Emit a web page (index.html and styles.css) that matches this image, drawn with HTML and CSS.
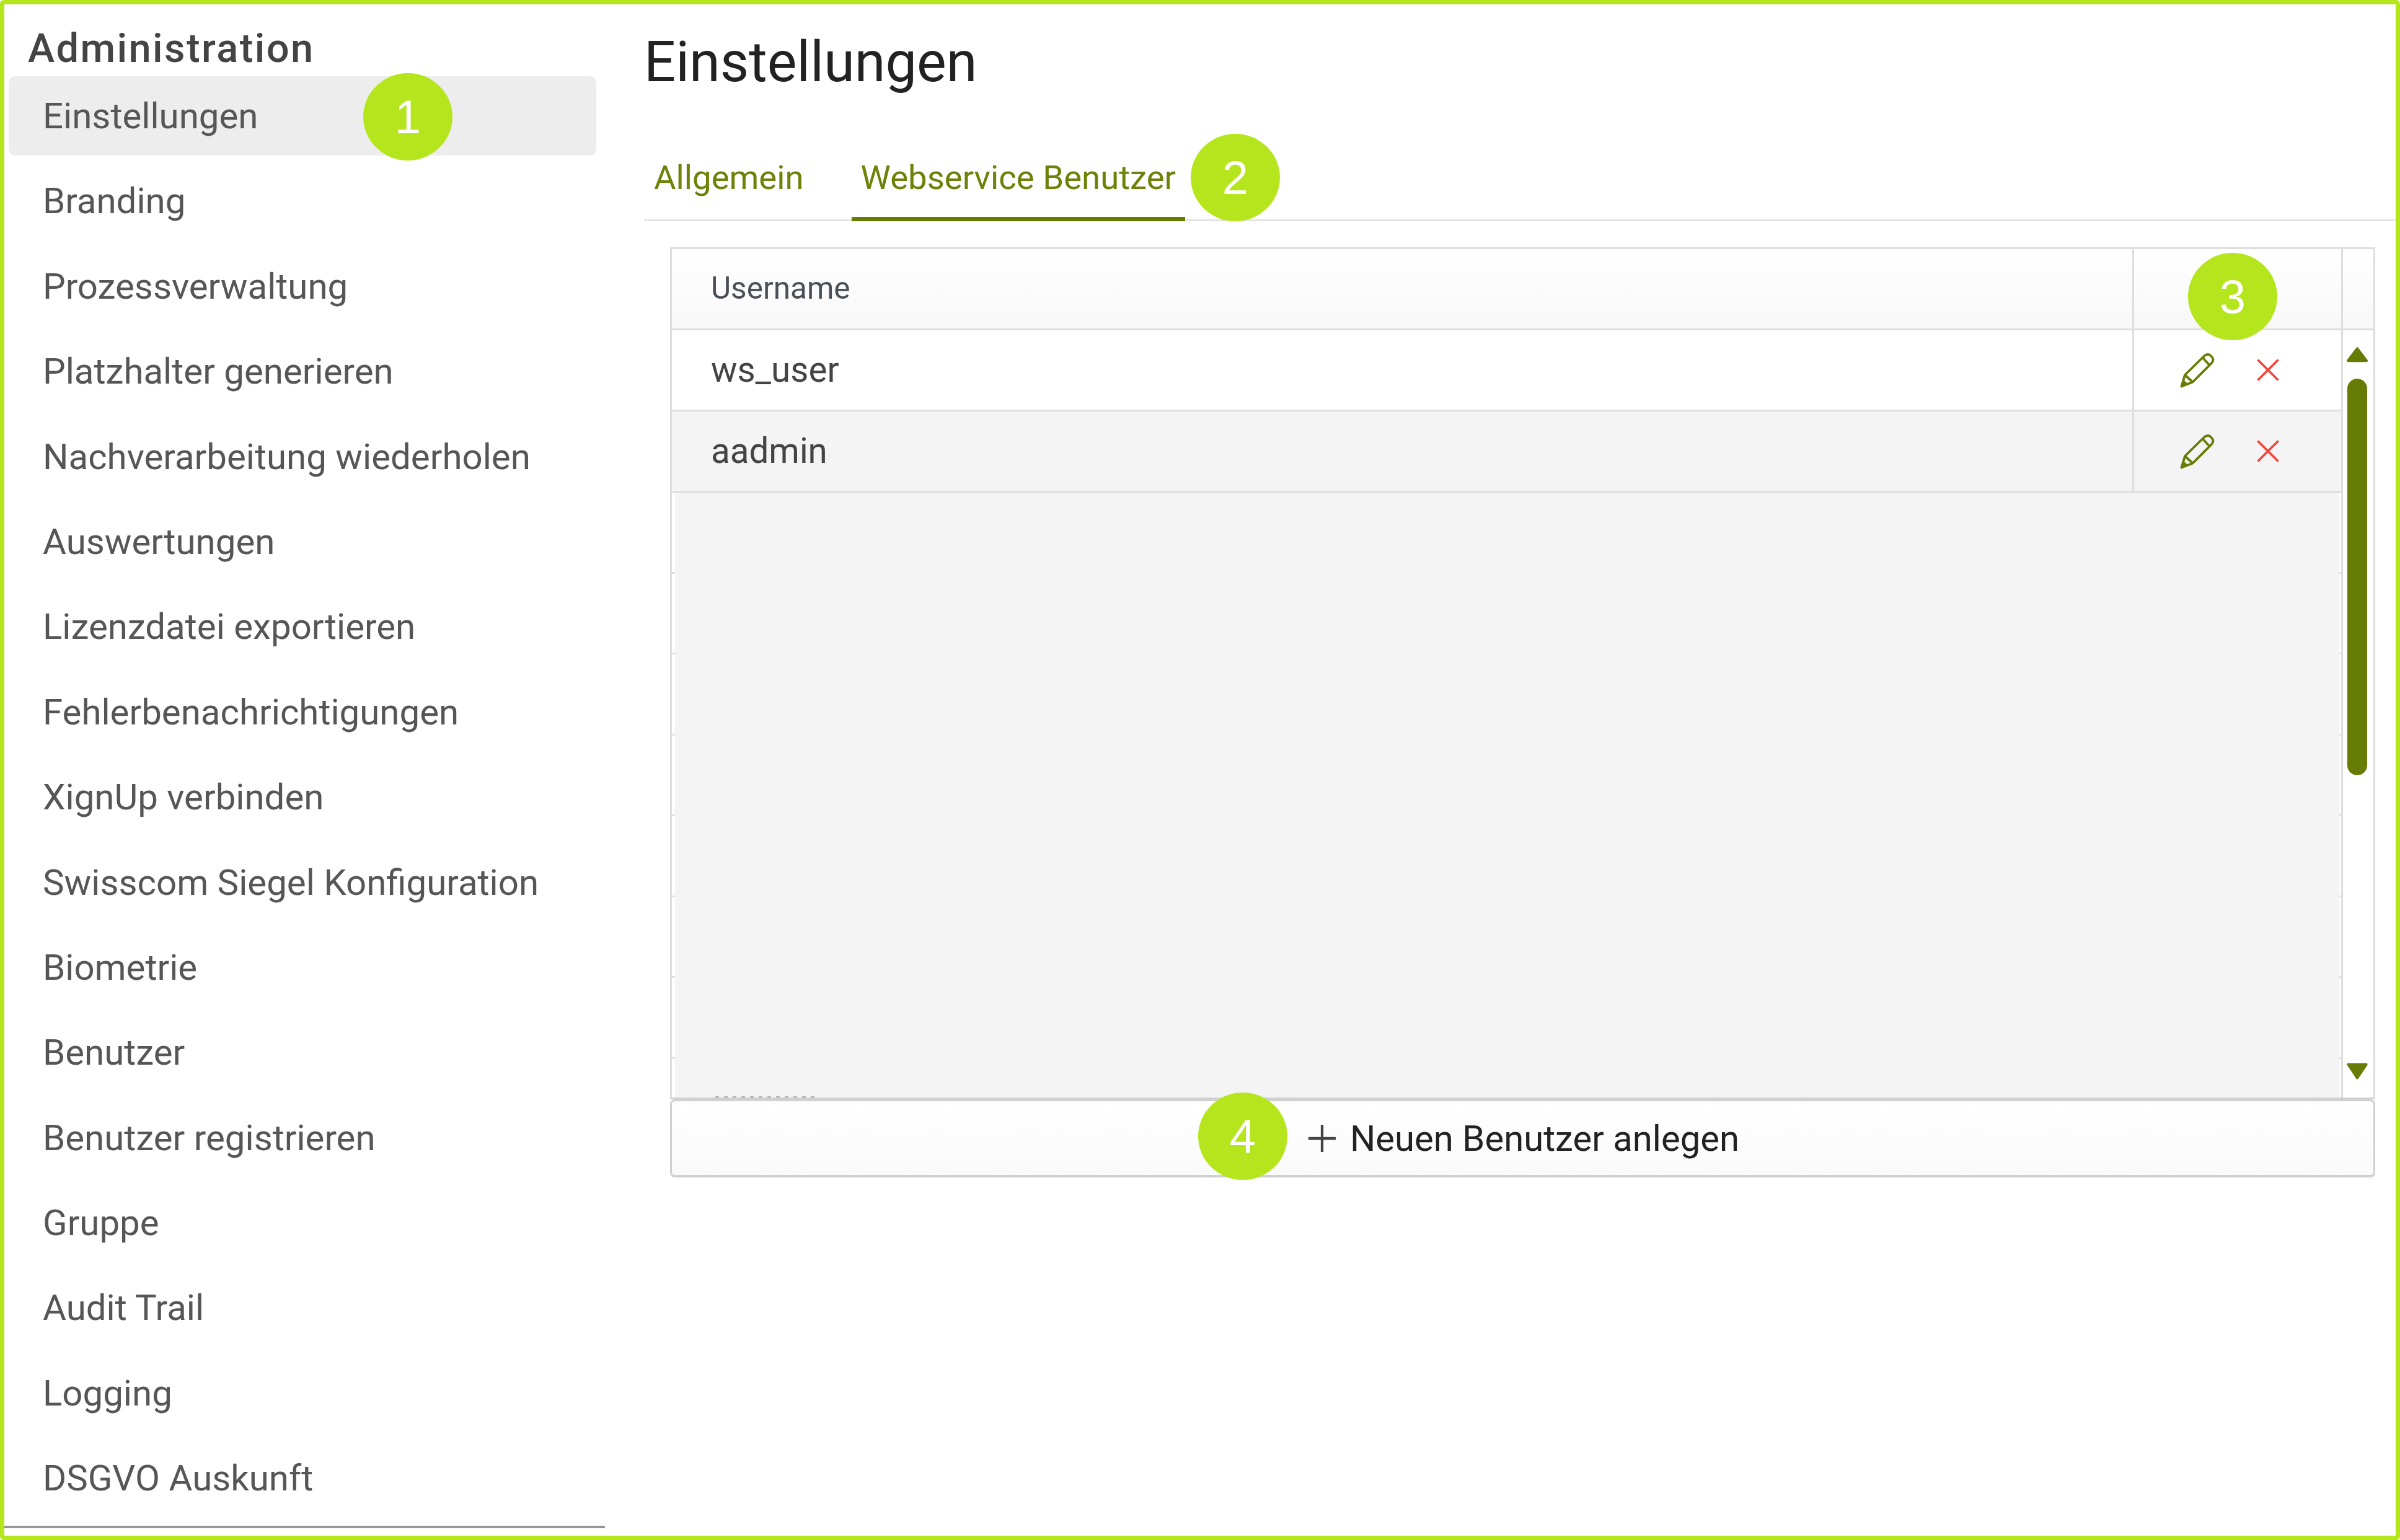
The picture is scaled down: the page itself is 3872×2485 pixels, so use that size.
FILE: index.html
```html
<!DOCTYPE html>
<html lang="de">
<head>
<meta charset="utf-8">
<title>Einstellungen</title>
<link rel="stylesheet" href="styles.css">
</head>
<body>
<div class="frame">
  <aside class="sidebar">
    <h2 class="side-title">Administration</h2>
    <nav class="nav">
      <a class="nav-item is-active">Einstellungen</a>
      <a class="nav-item">Branding</a>
      <a class="nav-item">Prozessverwaltung</a>
      <a class="nav-item">Platzhalter generieren</a>
      <a class="nav-item">Nachverarbeitung wiederholen</a>
      <a class="nav-item">Auswertungen</a>
      <a class="nav-item">Lizenzdatei exportieren</a>
      <a class="nav-item">Fehlerbenachrichtigungen</a>
      <a class="nav-item">XignUp verbinden</a>
      <a class="nav-item">Swisscom Siegel Konfiguration</a>
      <a class="nav-item">Biometrie</a>
      <a class="nav-item">Benutzer</a>
      <a class="nav-item">Benutzer registrieren</a>
      <a class="nav-item">Gruppe</a>
      <a class="nav-item">Audit Trail</a>
      <a class="nav-item">Logging</a>
      <a class="nav-item">DSGVO Auskunft</a>
    </nav>
  </aside>
  <main class="main">
    <h1 class="page-title">Einstellungen</h1>
    <div class="tabs">
      <a class="tab">Allgemein</a>
      <a class="tab is-active">Webservice Benutzer</a>
    </div>
    <section class="panel">
      <div class="grid">
        <div class="grid-head">
          <div class="cell cell-name head-label">Username</div>
          <div class="cell cell-actions"></div>
          <div class="cell cell-scroll"></div>
        </div>
        <div class="grid-body">
          <div class="rows">
            <div class="row">
              <div class="cell cell-name">ws_user</div>
              <div class="cell cell-actions">
                <svg class="icon-edit" viewBox="0 0 56 57"><path class="pencil" d="M2.500 54.500 L8 36 L38 6.500 Q43 1.500 48 3.500 L52 7.500 Q55.500 12.500 50.500 17.500 L20.500 47.500 Z M8 36 L20.500 47.500 M36.500 8 L47.500 20"/><path class="pencil-tip" d="M2 55 L5.500 43.500 L13 50.500 Z"/></svg>
                <svg class="icon-del" viewBox="0 0 36 36"><path d="M1.500 1.500 L34.500 34.500 M34.500 1.500 L1.500 34.500"/></svg>
              </div>
            </div>
            <div class="row row-alt">
              <div class="cell cell-name">aadmin</div>
              <div class="cell cell-actions">
                <svg class="icon-edit" viewBox="0 0 56 57"><path class="pencil" d="M2.500 54.500 L8 36 L38 6.500 Q43 1.500 48 3.500 L52 7.500 Q55.500 12.500 50.500 17.500 L20.500 47.500 Z M8 36 L20.500 47.500 M36.500 8 L47.500 20"/><path class="pencil-tip" d="M2 55 L5.500 43.500 L13 50.500 Z"/></svg>
                <svg class="icon-del" viewBox="0 0 36 36"><path d="M1.500 1.500 L34.500 34.500 M34.500 1.500 L1.500 34.500"/></svg>
              </div>
            </div>
            <div class="filler">
              <div class="ghost"></div>
              <div class="ghost"></div>
              <div class="ghost"></div>
              <div class="ghost"></div>
              <div class="ghost"></div>
              <div class="ghost"></div>
              <div class="ghost"></div>
              <div class="ghost"></div>
              <div class="filler-shade"></div>
              <div class="filler-trace"></div>
            </div>
          </div>
          <div class="scroll">
            <svg class="arrow arrow-up" viewBox="0 0 32 24"><path d="M16 3 L30 21.500 H2 Z"/></svg>
            <div class="thumb"></div>
            <svg class="arrow arrow-down" viewBox="0 0 32 26"><path d="M2 2.500 H30 L16 23.500 Z"/></svg>
          </div>
        </div>
      </div>
      <button class="add-btn">
        <svg class="icon-plus" viewBox="0 0 46 46"><path d="M23 0 V46 M0 23 H46"/></svg>
        <span>Neuen Benutzer anlegen</span>
      </button>
    </section>
  </main>
</div>
<div class="badge badge-1">1</div>
<div class="badge badge-2">2</div>
<div class="badge badge-3">3</div>
<div class="badge badge-4">4</div>
</body>
</html>
```

FILE: styles.css
```css
* { box-sizing: border-box; }
html, body { margin: 0; padding: 0; }
body {
  position: relative;
  width: 3872px;
  height: 2485px;
  background: #fff;
  font-family: "Roboto", "Liberation Sans", sans-serif;
  overflow: hidden;
}
.frame {
  display: flex;
  width: 3872px;
  height: 2485px;
  border: 7px solid #b5e61d;
  border-radius: 6px;
  background: #fff;
}
.sidebar {
  width: 969px;
  flex: none;
  height: 2459px;
  padding-left: 7px;
  border-bottom: 4px solid #959595;
}
.side-title {
  margin: 0;
  height: 116px;
  padding: 35px 0 0 31px;
  font-size: 65px;
  line-height: 72px;
  font-weight: 500;
  letter-spacing: 2.400px;
  color: #444;
}
.nav { display: flex; flex-direction: column; }
.nav-item {
  display: flex;
  align-items: center;
  width: 948px;
  height: 128px;
  margin-bottom: 9.400px;
  padding-left: 55px;
  border-radius: 10px;
  font-size: 58.200px;
  color: #565656;
  white-space: nowrap;
}
.nav-item.is-active { background: #ededed; }
.main {
  flex: 1;
  display: flex;
  flex-direction: column;
  padding-left: 63px;
}
.page-title {
  margin: 0;
  height: 167px;
  padding: 34px 0 0 0;
  font-size: 90px;
  line-height: 120px;
  font-weight: 400;
  color: #222;
}
.tabs {
  display: flex;
  height: 183px;
  align-items: flex-end;
  border-bottom: 3px solid #e2e2e2;
  padding-left: 1px;
}
.tab {
  display: flex;
  align-items: center;
  height: 126px;
  padding: 0 15px 9px;
  margin-right: 62px;
  margin-bottom: -3px;
  border-bottom: 7px solid transparent;
  font-size: 54.500px;
  color: #6d8208;
  white-space: nowrap;
}
.tab.is-active { border-bottom-color: #667c05; margin-right: 0; }
.panel {
  margin: 42px 33px 0 42px;
  display: flex;
  flex-direction: column;
}
.grid {
  height: 1375px;
  display: flex;
  flex-direction: column;
  border: 3px solid #dedede;
  border-bottom-color: #d0d0d0;
}
.grid-head {
  display: flex;
  height: 131px;
  flex: none;
  border-bottom: 3px solid #dedede;
  background: linear-gradient(#fff, #f8f8f8);
}
.cell {
  display: flex;
  align-items: center;
}
.cell-name {
  flex: 1;
  padding-left: 63px;
  font-size: 56.500px;
  color: #444;
}
.head-label { font-size: 49.500px; color: #4a5058; padding-bottom: 3px; }
.cell-actions {
  width: 337px;
  flex: none;
  border-left: 3px solid #dedede;
  padding-left: 74px;
}
.cell-scroll {
  width: 52px;
  flex: none;
  border-left: 3px solid #dedede;
}
.grid-body { flex: 1; display: flex; min-height: 0; }
.rows {
  flex: 1;
  display: flex;
  flex-direction: column;
  min-width: 0;
}
.row {
  display: flex;
  flex: none;
  height: 131px;
  border-bottom: 3px solid #dedede;
  background: #fff;
}
.row-alt { background: #f4f4f4; }
.filler {
  position: relative;
  flex: 1;
  min-height: 0;
  overflow: hidden;
}
.ghost {
  height: 130.500px;
  border-bottom: 3px solid #e2e2e2;
}
.filler-shade {
  position: absolute;
  left: 5px;
  right: 3px;
  top: 0;
  bottom: 0;
  background: #f4f4f4;
}
.filler-trace {
  position: absolute;
  left: 70px;
  bottom: 0;
  width: 165px;
  height: 2px;
  background: repeating-linear-gradient(90deg, #aab0b8 0 6px, transparent 6px 14px);
}
.scroll {
  width: 52px;
  flex: none;
  border-left: 3px solid #dedede;
  background: #fff;
  display: flex;
  flex-direction: column;
  align-items: center;
  padding: 26px 3px 0 0;
}
.arrow { width: 34px; flex: none; fill: #667c05; stroke: #667c05; stroke-width: 4; stroke-linejoin: round; }
.arrow-up { height: 26px; }
.arrow-down { height: 27px; }
.thumb {
  width: 32px;
  height: 640px;
  margin: 26px 0 464px;
  border-radius: 16px;
  background: #667c05;
  flex: none;
}
.icon-edit { width: 56px; height: 57px; flex: none; }
.pencil { fill: none; stroke: #667c05; stroke-width: 3.800; stroke-linejoin: round; }
.pencil-tip { fill: #667c05; }
.icon-del { width: 36px; height: 36px; flex: none; margin-left: 68px; }
.icon-del path { fill: none; stroke: #f0483c; stroke-width: 3.800; }
.add-btn {
  height: 126px;
  width: 100%;
  display: flex;
  align-items: center;
  justify-content: center;
  gap: 23px;
  padding: 0 0 0 4px;
  border: 3px solid #d0d0d0;
  border-bottom-width: 4px;
  border-radius: 8px;
  background: linear-gradient(#fff, #fafafa);
  font-family: inherit;
  font-size: 58px;
  font-weight: 400;
  color: #222;
}
.icon-plus { width: 44px; height: 46px; flex: none; }
.icon-plus path { fill: none; stroke: #444; stroke-width: 4.500; }
.badge {
  position: absolute;
  width: 144px;
  height: 141px;
  border-radius: 50%;
  background: #b5e61d;
  color: #fff;
  font-family: "Liberation Sans", Arial, sans-serif;
  font-size: 76px;
  display: flex;
  align-items: center;
  justify-content: center;
}
.badge-1 { left: 586px; top: 118px; }
.badge-2 { left: 1921px; top: 216px; }
.badge-3 { left: 3530px; top: 408px; }
.badge-4 { left: 1933px; top: 1763px; }
```
